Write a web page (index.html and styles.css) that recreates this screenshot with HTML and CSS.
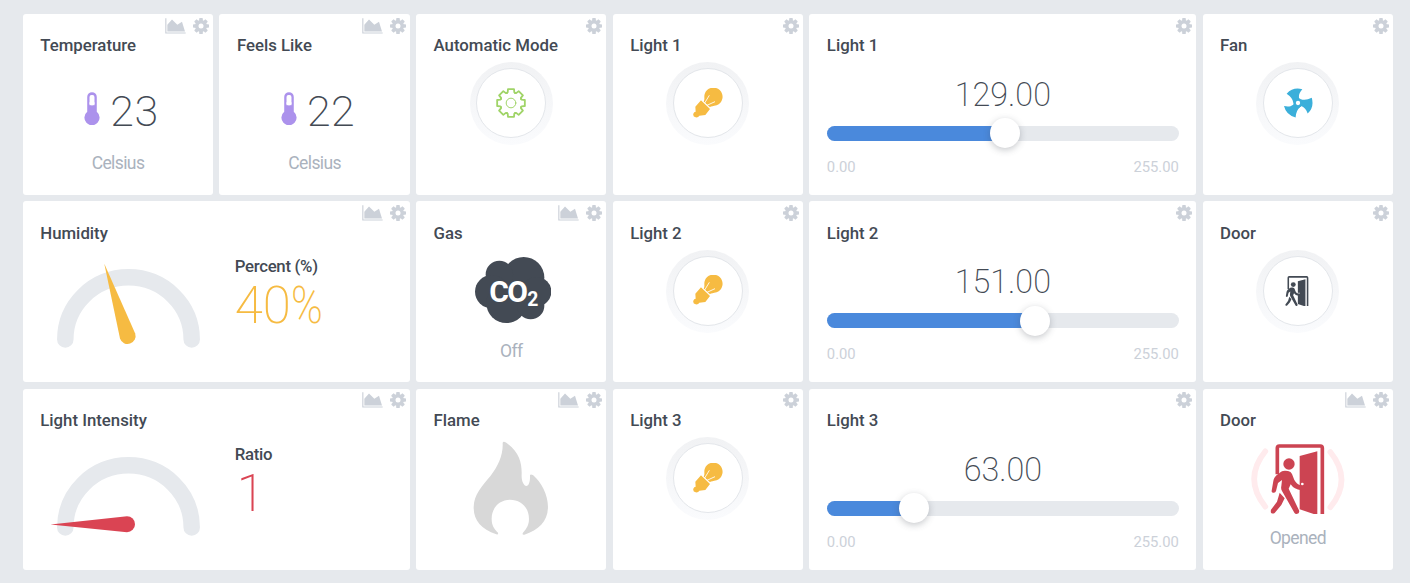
FILE: index.html
```html
<!DOCTYPE html>
<html lang="en">
<head>
<meta charset="utf-8">
<title>Home dashboard</title>
<link rel="stylesheet" href="styles.css">
</head>
<body>
<svg class="sprite" aria-hidden="true">
  <symbol id="chart" viewBox="496 53 63 47"><path d="M498.500 53V97.500H558" fill="none" stroke="#ccd1d9" stroke-width="3.500"/><path d="M503 93V73L517 57L533 73L547 64L556 93Z" fill="#ccd1d9"/></symbol>
  <symbol id="gear" viewBox="-24 -24 48 48"><g fill="#ccd1d9"><rect x="-5.500" y="-24" width="11" height="48" rx="2.500"/><rect x="-5.500" y="-24" width="11" height="48" rx="2.500" transform="rotate(45)"/><rect x="-5.500" y="-24" width="11" height="48" rx="2.500" transform="rotate(90)"/><rect x="-5.500" y="-24" width="11" height="48" rx="2.500" transform="rotate(135)"/><circle r="18"/></g><circle r="7.500" fill="#fff"/></symbol>
  <symbol id="thermo" viewBox="254 275 47 100"><path d="M263 290A14.500 14.500 0 0 1 292 290V335A23 23 0 1 1 263 335Z" fill="#ac92ec"/><rect x="270" y="284" width="15" height="31" rx="6" fill="#fff"/><rect x="270" y="306" width="15" height="9" fill="#fff"/></symbol>
  <symbol id="cog" viewBox="-45 -45 90 90"><g fill="none" stroke="#a0d468" stroke-width="5.500" stroke-linejoin="round" stroke-linecap="round"><g id="cogq"><path id="tooth" d="M-12.400 -30L-10 -32L-9 -41.500H9L10 -32L12.400 -30"/><use href="#tooth" transform="rotate(45)"/></g><use href="#cogq" transform="rotate(90)"/><use href="#cogq" transform="rotate(180)"/><use href="#cogq" transform="rotate(270)"/><circle r="14.500" stroke-width="3"/></g></symbol>
  <symbol id="bulb" viewBox="249 263 90 90"><g fill="#f6bb42"><path d="M280 304C286 297 281 292 284 281A27.500 27.500 0 1 1 320 315C309 318 305 317 299 321Z"/><path d="M273 300L300 326L286 344L268 346Q265 352 257 351Q248 349 250 340Q252 334 257 334L256 319Z"/></g><path d="M284 308L298 285M291 315L315 304M274 298L302 324" stroke="#fff" stroke-width="2.600" fill="none"/></symbol>
  <symbol id="fan" viewBox="280 263 90 90"><g fill="#3bafda"><path id="blade" d="M291 280Q311 259 338 267C330 277 327 283 328 293L331 303L311 307Q309 292 291 280Z"/><use href="#blade" transform="rotate(120 325 308)"/><use href="#blade" transform="rotate(240 325 308)"/><circle cx="325" cy="308" r="14"/></g><circle cx="325" cy="308" r="6.500" fill="#fff"/></symbol>
  <symbol id="door" viewBox="240 178 164 210"><path d="M261 269V190Q261 184 267 184H390Q396 184 396 190V388" fill="none" stroke="currentColor" stroke-width="11"/><g fill="currentColor"><path d="M328 214L381 200V388H370L328 374Z"/><circle cx="296" cy="238" r="17"/><path d="M244 318L249 289C251 276 262 269 275 260Q280 257 293 259Q302 260 305 268L312 286Q318 298 333 303V317Q311 314 301 299L295 312L326 377Q329 387 319 388Q314 388 312 384L275 319Q271 312 273 304L275 286L263 295L257 319Q255 326 248 324Q243 323 244 318Z"/><path d="M268 324L283 341L273 361L253 385Q247 389 242 384Q239 380 242 375L260 351Z"/></g><circle cx="336" cy="298" r="4" fill="#fff"/></symbol>
</svg>
<main class="board">
  <section class="card">
    <div class="tools"><svg class="i-chart"><use href="#chart"/></svg><svg class="i-gear"><use href="#gear"/></svg></div>
    <h2>Temperature</h2>
    <div class="reading"><svg class="i-thermo"><use href="#thermo"/></svg><span>23</span></div>
    <p class="unit">Celsius</p>
  </section>
  <section class="card">
    <div class="tools"><svg class="i-chart"><use href="#chart"/></svg><svg class="i-gear"><use href="#gear"/></svg></div>
    <h2>Feels Like</h2>
    <div class="reading"><svg class="i-thermo"><use href="#thermo"/></svg><span>22</span></div>
    <p class="unit">Celsius</p>
  </section>
  <section class="card">
    <div class="tools"><svg class="i-gear"><use href="#gear"/></svg></div>
    <h2>Automatic Mode</h2>
    <div class="ring"><div class="push"><svg class="i-push"><use href="#cog"/></svg></div></div>
  </section>
  <section class="card">
    <div class="tools"><svg class="i-gear"><use href="#gear"/></svg></div>
    <h2>Light 1</h2>
    <div class="ring"><div class="push"><svg class="i-push"><use href="#bulb"/></svg></div></div>
  </section>
  <section class="card wide">
    <div class="tools"><svg class="i-gear"><use href="#gear"/></svg></div>
    <h2>Light 1</h2>
    <div class="level">129.00</div>
    <div class="track"><div class="fill" style="width:50.6%"></div><div class="thumb"></div></div>
    <div class="range"><span>0.00</span><span>255.00</span></div>
  </section>
  <section class="card">
    <div class="tools"><svg class="i-gear"><use href="#gear"/></svg></div>
    <h2>Fan</h2>
    <div class="ring"><div class="push"><svg class="i-push"><use href="#fan"/></svg></div></div>
  </section>

  <section class="card wide">
    <div class="tools"><svg class="i-chart"><use href="#chart"/></svg><svg class="i-gear"><use href="#gear"/></svg></div>
    <h2>Humidity</h2>
    <div class="meter">
      <svg class="gauge" viewBox="0 0 160 92"><path d="M15.300 78.500A63.200 62.200 0 0 1 141.700 78.500" fill="none" stroke="#e6e9ed" stroke-width="16.500" stroke-linecap="round"/><path d="M54.300 2.700L85.200 72.500A8 8 0 0 1 70 77.500Z" fill="#f6bb42"/></svg>
      <div class="info"><h3>Percent (%)</h3><div class="big amber">40<span class="pct">%</span></div></div>
    </div>
  </section>
  <section class="card">
    <div class="tools"><svg class="i-chart"><use href="#chart"/></svg><svg class="i-gear"><use href="#gear"/></svg></div>
    <h2>Gas</h2>
    <svg class="gas" viewBox="194 200 230 198"><g fill="#434a54"><circle cx="340" cy="262" r="62"/><circle cx="267" cy="252" r="41"/><circle cx="244" cy="304" r="50"/><circle cx="288" cy="338" r="60"/><circle cx="361" cy="346" r="41"/><circle cx="379" cy="304" r="44"/></g><text class="formula" x="237" y="335">CO<tspan class="sub" dx="3" dy="11">2</tspan></text></svg>
    <p class="unit">Off</p>
  </section>
  <section class="card">
    <div class="tools"><svg class="i-gear"><use href="#gear"/></svg></div>
    <h2>Light 2</h2>
    <div class="ring"><div class="push"><svg class="i-push"><use href="#bulb"/></svg></div></div>
  </section>
  <section class="card wide">
    <div class="tools"><svg class="i-gear"><use href="#gear"/></svg></div>
    <h2>Light 2</h2>
    <div class="level">151.00</div>
    <div class="track"><div class="fill" style="width:59.2%"></div><div class="thumb"></div></div>
    <div class="range"><span>0.00</span><span>255.00</span></div>
  </section>
  <section class="card">
    <div class="tools"><svg class="i-gear"><use href="#gear"/></svg></div>
    <h2>Door</h2>
    <div class="ring"><div class="push"><svg class="i-push dark"><use href="#door"/></svg></div></div>
  </section>

  <section class="card wide">
    <div class="tools"><svg class="i-chart"><use href="#chart"/></svg><svg class="i-gear"><use href="#gear"/></svg></div>
    <h2>Light Intensity</h2>
    <div class="meter">
      <svg class="gauge" viewBox="0 0 160 92"><path d="M15.300 78.500A63.200 62.200 0 0 1 141.700 78.500" fill="none" stroke="#e6e9ed" stroke-width="16.500" stroke-linecap="round"/><path d="M0.500 75.500L77 67.200A8 8 0 0 1 77 83.200Z" fill="#da4453"/></svg>
      <div class="info"><h3>Ratio</h3><div class="big red">1</div></div>
    </div>
  </section>
  <section class="card">
    <div class="tools"><svg class="i-chart"><use href="#chart"/></svg><svg class="i-gear"><use href="#gear"/></svg></div>
    <h2>Flame</h2>
    <svg class="flame" viewBox="190 169 226 282"><path fill="#d8d8d8" d="M279 175Q280 168 290 174C330 203 337 236 336 270C335 290 343 304 350 304C358 304 362 290 361 272Q362 267 370 271C395 292 415 330 415 366C415 410 388 435 344 450Q336 451 340 444C352 430 358 420 358 402C358 368 333 345 301 345C269 345 246 370 246 402C246 422 253 432 265 444Q267 451 260 449C214 433 192 408 192 368C192 330 217 304 243 273C265 245 281 210 279 175Z"/></svg>
  </section>
  <section class="card">
    <div class="tools"><svg class="i-gear"><use href="#gear"/></svg></div>
    <h2>Light 3</h2>
    <div class="ring"><div class="push"><svg class="i-push"><use href="#bulb"/></svg></div></div>
  </section>
  <section class="card wide">
    <div class="tools"><svg class="i-gear"><use href="#gear"/></svg></div>
    <h2>Light 3</h2>
    <div class="level">63.00</div>
    <div class="track"><div class="fill" style="width:24.7%"></div><div class="thumb"></div></div>
    <div class="range"><span>0.00</span><span>255.00</span></div>
  </section>
  <section class="card">
    <div class="tools"><svg class="i-chart"><use href="#chart"/></svg><svg class="i-gear"><use href="#gear"/></svg></div>
    <h2>Door</h2>
    <svg class="alarm" viewBox="182 178 282 210"><path d="M225 200Q158 283 225 366M420 202Q487 285 420 368" fill="none" stroke="#ffebed" stroke-width="17" stroke-linecap="round"/><svg x="240" y="178" width="164" height="210"><use href="#door"/></svg></svg>
    <p class="unit">Opened</p>
  </section>
</main>
</body>
</html>
```
FILE: styles.css
```css
* { box-sizing: border-box; }
body {
  margin: 0;
  background: #e6e9ed;
  color: #434a54;
  font-family: "Roboto", "Open Sans", sans-serif;
  height: 583px;
  overflow: hidden;
}
.sprite { display: none; }
svg { display: block; }
.board {
  width: 1370.300px;
  margin: 0 0 0 22.750px;
  padding-top: 13.900px;
  display: grid;
  grid-template-columns: repeat(7, 1fr);
  grid-auto-rows: 181px;
  gap: 6.400px 6.200px;
}
.card {
  background: #fff;
  border-radius: 3px;
  display: flex;
  flex-direction: column;
  overflow: hidden;
}
.wide { grid-column: span 2; }
.tools {
  height: 21px;
  padding: 3.700px 4.300px 0 0;
  display: flex;
  justify-content: flex-end;
  gap: 7px;
  flex: none;
}
.i-chart { width: 21px; height: 16px; }
.i-gear { width: 16px; height: 16px; }
h2, h3 { margin: 0; font-weight: 500; font-size: 16.800px; line-height: 20px; }
h2 { padding: 0.400px 0 0 17.500px; height: 21px; flex: none; }
h3 { letter-spacing: -0.300px; }
.reading {
  display: flex;
  justify-content: center;
  align-items: center;
  gap: 10px;
  height: 50px;
  margin-top: 30.500px;
  padding-left: 7px;
  font-size: 43px;
  letter-spacing: 0.500px;
  font-weight: 200;
}
.i-thermo { width: 16px; height: 33px; margin-top: -5px; }
.unit {
  margin: auto 0 19.500px;
  text-align: center;
  color: #aab2bd;
  font-size: 17.500px;
  letter-spacing: -0.600px;
  line-height: 24px;
  font-weight: 400;
}
.ring {
  width: 83px;
  height: 83px;
  margin: 6.500px auto 0;
  border-radius: 50%;
  background: linear-gradient(#f1f2f4, #fafbfd);
  display: flex;
  align-items: center;
  justify-content: center;
}
.push {
  width: 70px;
  height: 70px;
  margin-bottom: 1px;
  border-radius: 50%;
  border: 1px solid #e3e6ea;
  background: #fff;
  display: flex;
  align-items: center;
  justify-content: center;
}
.i-push { width: 30px; height: 30px; margin-bottom: 1px; }
.dark { color: #434a54; margin: 0 1px 0 0; }
.level {
  text-align: center;
  font-size: 32.300px;
  line-height: 40px;
  font-weight: 200;
  margin-top: 19px;
}
.track {
  display: flex;
  align-items: center;
  height: 15px;
  margin: 11px 17.500px 0;
  border-radius: 8px;
  background: #e6e9ed;
}
.fill { height: 15px; border-radius: 8px 0 0 8px; background: #4a89dc; flex: none; }
.thumb {
  width: 30px;
  height: 30px;
  margin-left: -15px;
  flex: none;
  border-radius: 50%;
  background: #fff;
  box-shadow: 0 2px 7px rgba(67, 74, 84, .3);
}
.range {
  display: flex;
  justify-content: space-between;
  margin: 15.900px 17.500px 0;
  font-size: 14.800px;
  line-height: 20px;
  color: #ccd1d9;
}
.meter { display: flex; padding: 18px 0 0 27px; }
.gauge { width: 160px; height: 92px; flex: none; }
.info { padding: 0 0 0 25px; margin-top: -5px; }
.big { font-size: 51px; line-height: 60px; font-weight: 200; }
.pct { display: inline-block; transform: scaleX(.84); transform-origin: left; }
.amber { color: #f6bb42; }
.red { color: #da4453; padding-left: 2px; }
.gas { width: 76.700px; height: 66px; margin: 13.500px 0 0 58.500px; }
.formula { fill: #fff; font-weight: 700; font-size: 90px; letter-spacing: -5px; }
.sub { font-size: 58px; letter-spacing: 0; }
.flame { width: 75.300px; height: 94px; margin: 10.500px 0 0 56.800px; }
.alarm { width: 94px; height: 70px; margin: 13.500px 0 0 48.300px; color: #cc4452; }
```
